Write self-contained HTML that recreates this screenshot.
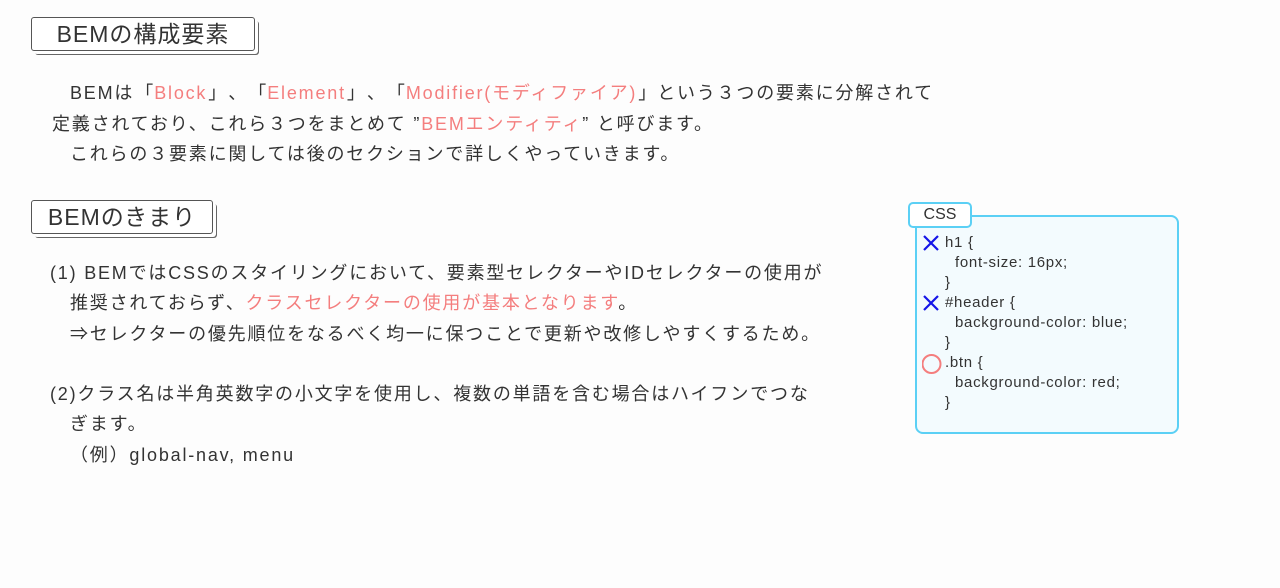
<!DOCTYPE html><html><head><meta charset="utf-8"><style>
body{margin:0;width:1280px;height:588px;background:#fdfdfd;font-family:"Liberation Sans","Noto Sans CJK JP",sans-serif;color:#333;position:relative;overflow:hidden;text-spacing-trim:space-all}
.h{position:absolute;border:1px solid #555;border-radius:3px;background:#fff;box-shadow:3px 3px 0 #fff,4px 4px 0 #666;font-size:23px;letter-spacing:1px;text-align:center;line-height:32px;color:#333}
.t{position:absolute;font-size:18px;letter-spacing:1.8px;white-space:nowrap;line-height:20px}
.r{color:#f47e7e}
.p{display:inline-block;width:20px;text-align:center;letter-spacing:0}
.box{position:absolute;left:915px;top:215px;width:260px;height:215px;border:2px solid #5bd0f5;border-radius:8px;background:#f3fbfe}
.tab{position:absolute;left:908px;top:202px;width:60px;height:22px;border:2px solid #5bd0f5;border-radius:5px;background:#fff;font-size:16px;text-align:center;line-height:22px}
.c{position:absolute;font-size:15px;letter-spacing:0.7px;white-space:nowrap;line-height:20px}
</style></head><body>
<div class="h" style="left:31px;top:17px;width:222px;height:32px">BEMの構成要素</div>
<div class="t" style="left:70px;top:83px">BEMは<span class="p">「</span><span class="r">Block</span><span class="p">」</span><span class="p">、</span><span class="p">「</span><span class="r">Element</span><span class="p">」</span><span class="p">、</span><span class="p">「</span><span class="r">Modifier(モディファイア)</span><span class="p">」</span>という３つの要素に分解されて</div>
<div class="t" style="left:52px;top:114px">定義されており、これら３つをまとめて ”<span class="r">BEMエンティティ</span>” と呼びます。</div>
<div class="t" style="left:70px;top:144px">これらの３要素に関しては後のセクションで詳しくやっていきます。</div>
<div class="h" style="left:31px;top:200px;width:180px;height:32px">BEMのきまり</div>
<div class="t" style="left:50px;top:263px">(1) BEMではCSSのスタイリングにおいて、要素型セレクターやIDセレクターの使用が</div>
<div class="t" style="left:70px;top:293px">推奨されておらず、<span class="r">クラスセレクターの使用が基本となります</span>。</div>
<div class="t" style="left:70px;top:324px">⇒セレクターの優先順位をなるべく均一に保つことで更新や改修しやすくするため。</div>
<div class="t" style="left:50px;top:384px">(2)クラス名は半角英数字の小文字を使用し、複数の単語を含む場合はハイフンでつな</div>
<div class="t" style="left:70px;top:414px">ぎます。</div>
<div class="t" style="left:70px;top:445px">（例）global-nav, menu</div>
<div class="box"></div>
<div class="tab">CSS</div>
<svg style="position:absolute;left:922px;top:234px" width="20" height="140"><g stroke="#1515e8" stroke-width="2.2"><path d="M2 2L16 16M16 2L2 16"/><path d="M2 62L16 76M16 62L2 76"/></g><circle cx="9.5" cy="130" r="9" fill="none" stroke="#f47e7e" stroke-width="2"/></svg>
<div class="c" style="left:945px;top:233px">h1 {</div>
<div class="c" style="left:955px;top:253px">font-size: 16px;</div>
<div class="c" style="left:945px;top:273px">}</div>
<div class="c" style="left:945px;top:293px">#header {</div>
<div class="c" style="left:955px;top:313px">background-color: blue;</div>
<div class="c" style="left:945px;top:333px">}</div>
<div class="c" style="left:945px;top:353px">.btn {</div>
<div class="c" style="left:955px;top:373px">background-color: red;</div>
<div class="c" style="left:945px;top:393px">}</div>
</body></html>
